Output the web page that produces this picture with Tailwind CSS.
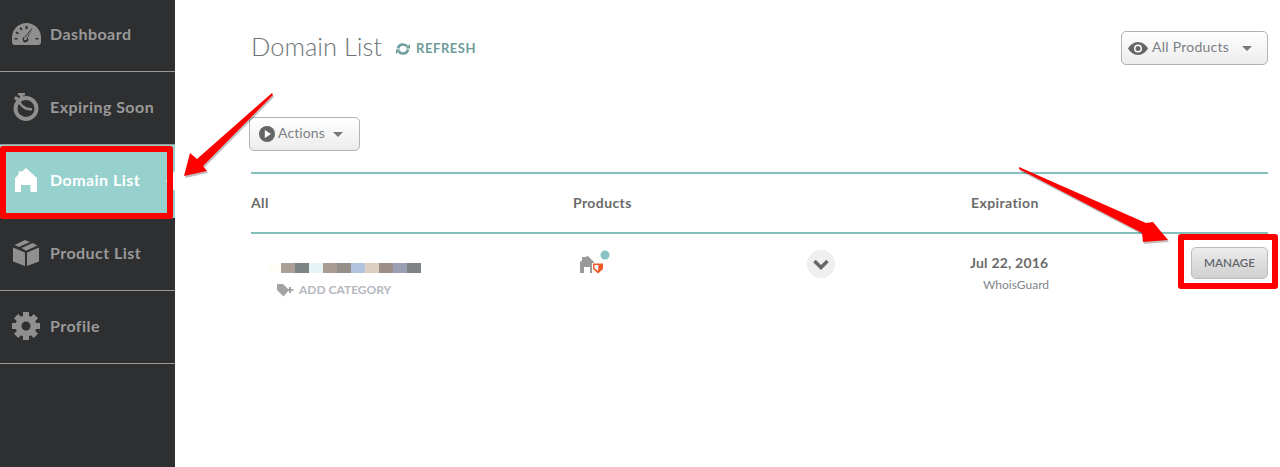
<!DOCTYPE html>
<html lang="en">
<head>
  <meta charset="UTF-8" />
  <title>Domain List</title>
  <script src="https://cdn.jsdelivr.net/npm/@tailwindcss/browser@4"></script>
</head>
<body class="bg-white text-[#6b6b6b] font-['Lato',sans-serif] overflow-hidden">
<div class="relative flex w-[1280px] h-[467px] overflow-hidden">

  <!-- Sidebar -->
  <aside class="w-[175px] h-full bg-[#2e2f31] shrink-0 text-[#999999] text-[16px] font-bold tracking-[0.45px]">
    <a class="flex items-center h-[72px] pb-[4px] border-b border-[#9a9a9a]">
      <svg class="ml-[12px] w-[29px] h-[22px]" viewBox="0 0 29 22"><path fill="#8f8f8f" d="M14.5 0C6.5 0 0 6.5 0 14.5V19c0 1.7 1.3 3 3 3h23c1.700 0 3-1.300 3-3v-4.500C29 6.500 22.500 0 14.500 0z"/><path fill="#2e2f31" d="M13.500 3h2v3h-2zM7.500 5l1.500-1 1.500 2.500-1.500 1zM3.500 10l1-1.500 2.500 1.500-1 1.500zM2.500 15h3v1.500h-3zM23.500 15h3v1.500h-3z"/><path fill="#2e2f31" d="M20.500 4.500 15.800 15a2.800 2.800 0 1 1-3-1.200z"/><path fill="#8f8f8f" d="M19.500 7 14.800 15.200a1.500 1.500 0 1 1-1.600-1z"/></svg>
      <span class="ml-[9px]">Dashboard</span>
    </a>
    <a class="flex items-center h-[73px] pb-[2px] border-b border-[#9a9a9a]">
      <svg class="ml-[13px] w-[26px] h-[28px]" viewBox="0 0 26 28"><circle cx="13" cy="15.500" r="10.500" fill="none" stroke="#8f8f8f" stroke-width="4"/><path fill="#8f8f8f" d="M5 0h7v2.500h-2v3H7v-3H5zM2.500 3 1 6l3 2 2-3z"/><path fill="none" stroke="#8f8f8f" stroke-width="2.500" d="M6.500 9.500Q9 14 13 15.500l6 1"/></svg>
      <span class="ml-[11px]">Expiring Soon</span>
    </a>
    <a class="relative flex items-center h-[73px] pb-[2px] bg-[#97d1ce] text-white border-b border-[#97d1ce]">
      <svg class="ml-[15px] w-[22px] h-[24px]" viewBox="0 0 22 24"><path fill="#fff" d="M11 0 7 3.500H3.500V6.500L0 10v14h6v-7h9.500v7H22V10z"/></svg>
      <span class="ml-[13px]">Domain List</span>
      <span class="absolute right-0 top-[26px] border-y-[10px] border-r-[9px] border-y-transparent border-r-white"></span>
    </a>
    <a class="flex items-center h-[73px] pb-[2px] border-b border-[#9a9a9a]">
      <svg class="ml-[13px] w-[26px] h-[26px]" viewBox="0 0 26 26"><path fill="#8f8f8f" d="M0 7.500 12 12.500V26L0 21.500zM26 7.500 14 12.500V26l12-4.500z"/><path fill="#8f8f8f" d="M12 0 1.500 5 6 7l11-5zM19.500 3 8.500 8l4.500 2.800L24.500 5.500z"/></svg>
      <span class="ml-[11px]">Product List</span>
    </a>
    <a class="flex items-center h-[73px] pb-[2px] border-b border-[#9a9a9a]">
      <svg class="ml-[12px] w-[28px] h-[28px]" viewBox="0 0 28 28"><g fill="#8f8f8f"><circle cx="14" cy="14" r="10.500"/><path d="M11 0h6v6h-6zM11 22h6v6h-6zM0 11h6v6H0zM22 11h6v6h-6z"/><path d="M11 0h6v6h-6zM11 22h6v6h-6zM0 11h6v6H0zM22 11h6v6h-6z" transform="rotate(45 14 14)"/></g><circle cx="14" cy="14" r="4.500" fill="#2e2f31"/></svg>
      <span class="ml-[10px]">Profile</span>
    </a>
  </aside>

  <!-- Main -->
  <main class="flex-1 pl-[76px] pr-[12px]">
    <div class="flex items-start justify-between h-[117px] pt-[31px]">
      <div class="flex items-center h-[31px]">
        <h1 class="text-[25.500px] font-light text-[#6f7478] leading-none">Domain List</h1>
        <svg class="ml-[14px] mt-[5px] w-[14px] h-[12px]" viewBox="0 0 14 12"><path fill="none" stroke="#6e9c9c" stroke-width="2.600" d="M2 5.500C2.500 3 4.500 1.500 7 1.500c1.800 0 3.200.7 4.200 2M12 6.500C11.500 9 9.500 10.500 7 10.500c-1.800 0-3.200-.7-4.200-2"/><path fill="#6e9c9c" d="M14 1v4.500H9.500zM0 11V6.500h4.500z"/></svg>
        <span class="ml-[6px] mt-[5px] text-[13px] font-bold text-[#6e9c9c] tracking-[0.55px]">REFRESH</span>
      </div>
      <button class="flex items-center w-[147px] h-[34px] pb-[3px] border border-[#b3b3b3] rounded-[5px] bg-gradient-to-b from-white to-[#ececec] text-[14px] tracking-[0.25px] text-[#7a7f85]">
        <svg class="ml-[6px] w-[20px] h-[13px] mt-[3px]" viewBox="0 0 20 13"><path fill="#666" d="M10 0C5.500 0 2 3 0 6.500 2 10 5.500 13 10 13s8-3 10-6.500C18 3 14.500 0 10 0z"/><circle cx="10" cy="6.500" r="4" fill="#fff"/><circle cx="10" cy="6.500" r="2.500" fill="#666"/></svg>
        <span class="ml-[4px]">All Products</span>
        <span class="ml-[13px] mt-[4px] border-x-[5px] border-t-[5px] border-x-transparent border-t-[#777]"></span>
      </button>
    </div>

    <button class="flex items-center -ml-[2px] w-[111px] h-[34px] pb-[3px] border border-[#b3b3b3] rounded-[5px] bg-gradient-to-b from-white to-[#ececec] text-[14px] tracking-[0.1px] text-[#7a7f85]">
      <svg class="ml-[9px] w-[16px] h-[16px] mt-[3px]" viewBox="0 0 16 16"><circle cx="8" cy="8" r="8" fill="#666"/><path fill="#fff" d="M5.800 4v8L12 8z"/></svg>
      <span class="ml-[3px]">Actions</span>
      <span class="ml-[8px] mt-[3px] border-x-[5px] border-t-[5px] border-x-transparent border-t-[#777]"></span>
    </button>

    <!-- Table header -->
    <div class="mt-[21px] grid grid-cols-[322px_398px_1fr] items-center h-[62px] pb-[2px] border-y-2 border-[#85c0bc] text-[14px] font-bold tracking-[0.4px] text-[#6b6b6b]">
      <span>All</span>
      <span>Products</span>
      <span>Expiration</span>
    </div>

    <!-- Row -->
    <div class="grid grid-cols-[322px_234px_164px_1fr] h-[60px]">
      <div class="pl-[16px] pt-[29px]">
        <div class="flex h-[10px]">
          <i class="w-[14px] bg-[#fffdf8]"></i><i class="w-[14px] bg-[#aaa097]"></i><i class="w-[14px] bg-[#7d8484]"></i><i class="w-[14px] bg-[#e6f4f8]"></i><i class="w-[14px] bg-[#a99b91]"></i><i class="w-[14px] bg-[#968e88]"></i><i class="w-[14px] bg-[#b0c5dd]"></i><i class="w-[14px] bg-[#ddd0c2]"></i><i class="w-[14px] bg-[#9b8e87]"></i><i class="w-[14px] bg-[#9a9fb3]"></i><i class="w-[14px] bg-[#7f8386]"></i>
        </div>
        <div class="flex items-center ml-[10px] mt-[8px] text-[12px] font-bold text-[#b4b8bf]">
          <svg class="w-[17px] h-[13px]" viewBox="0 0 17 13"><path fill="#a3a3a3" d="M0 0h6l6 6-5.500 6.500L0 6z"/><path fill="#a3a3a3" d="M12 3h2v2h2.500v1.800H14V9h-2V6.800H10V5h2z"/></svg>
          <span class="ml-[5px]">ADD CATEGORY</span>
        </div>
      </div>
      <div class="pl-[6px] pt-[16px]">
        <svg class="w-[32px] h-[24px]" viewBox="0 0 32 24">
          <path fill="#9a9a9a" d="M1 23V12L3 10.500V7h3l3-1 6 6v4h-2v7h-2v-6H5v6z"/>
          <path fill="#fff" d="M13 13h11.500v6l-5.500 5-6-5z"/>
          <path fill="#ef5a24" d="M14 13.500h10v5.500l-5 4.500-5-4.500z"/>
          <path fill="#fff" d="M15.500 15h4l-.5 6-3.500-2.800z"/>
          <circle cx="26" cy="5" r="4.500" fill="#8ac3c6"/>
        </svg>
      </div>
      <div class="pt-[16px]">
        <div class="flex items-center justify-center w-[28px] h-[28px] rounded-full bg-[#efefef]">
          <svg class="w-[16px] h-[11px]" viewBox="0 0 16 11"><path fill="none" stroke="#666" stroke-width="3.500" d="M1.500 2 8 8.500 14.500 2"/></svg>
        </div>
      </div>
      <div class="pt-[20px]">
        <div class="flex justify-between">
          <div class="w-[82px] ml-[-1px] text-[14px] font-bold tracking-[0.2px] text-[#6b6b6b] leading-[18px] whitespace-nowrap">Jul 22, 2016
            <div class="text-right text-[12px] font-normal tracking-normal text-[#7f868c] leading-[16px] mt-[5px] mr-[3px]">WhoisGuard</div>
          </div>
          <button class="mt-[-7px] w-[77px] h-[32px] border border-[#bbbbbb] rounded-[5px] bg-gradient-to-b from-[#ececec] to-[#cfd0cf] text-[11.700px] font-semibold text-[#62676d]">MANAGE</button>
        </div>
      </div>
    </div>
  </main>

  <!-- Annotations drawn over the page -->
  <div class="absolute left-0 top-[146px] w-[173px] h-[73px] border-[6px] border-[#fe0000] rounded-[3px] pointer-events-none"></div>
  <div class="absolute left-[1178px] top-[234px] w-[100px] h-[55px] border-[6px] border-[#fe0000] rounded-[3px] pointer-events-none"></div>
  <svg class="absolute left-0 top-0 w-[1280px] h-[467px] pointer-events-none" viewBox="0 0 1280 467">
    <g fill="#000" opacity="0.25" transform="translate(1 2)">
      <path d="M272 93 197 159 190 153 184 176 207 171 203 166 273 95z"/>
      <path d="M1019 167 1146 223 1153 222 1168 240 1143 242 1142 233 1019 169z"/>
    </g>
    <g fill="#fe0000">
      <path d="M272 93 197 159 190 153 184 176 207 171 203 166 273 95z"/>
      <path d="M1019 167 1146 223 1153 222 1168 240 1143 242 1142 233 1019 169z"/>
    </g>
  </svg>
</div>
</body>
</html>
